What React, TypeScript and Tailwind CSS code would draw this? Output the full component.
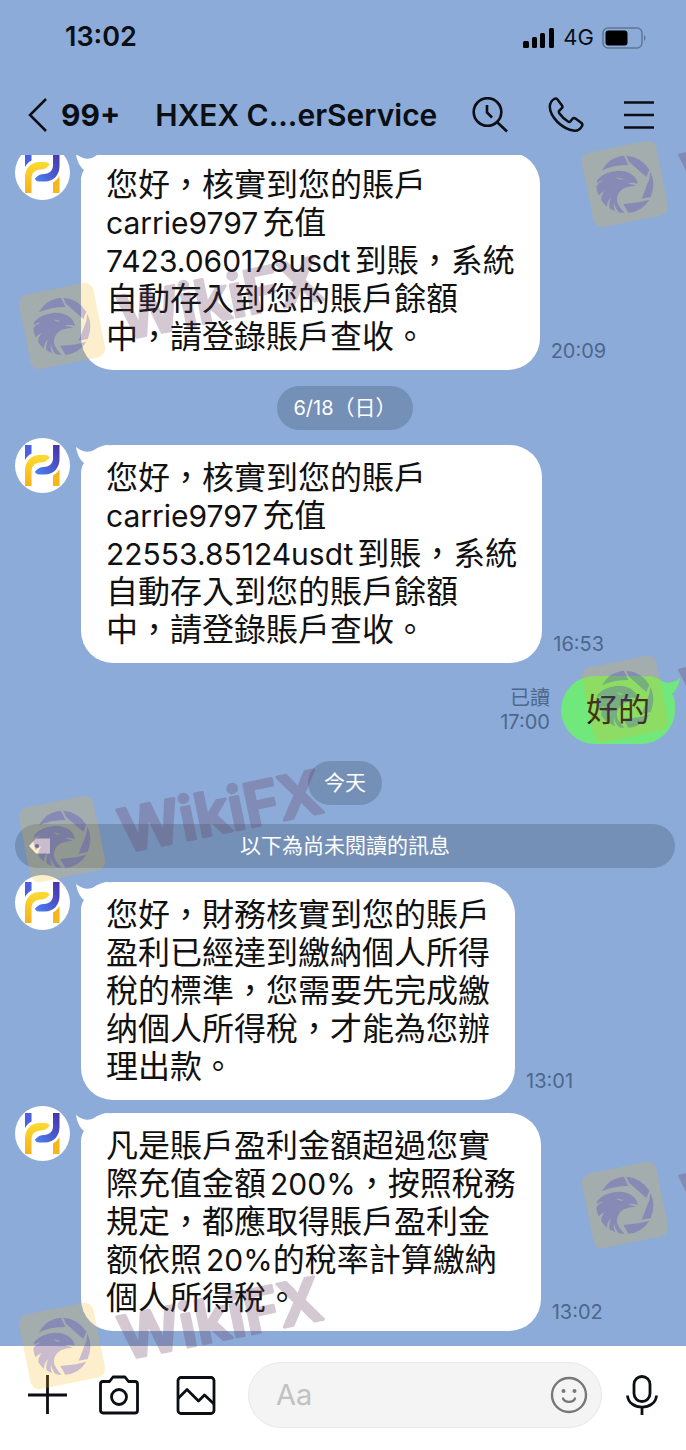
import type { ReactNode } from "react";

interface IMessage {
    id: string;
    time: string;
    lines: string[];
}

const june: IMessage[] = [
    {
        id: '1',
        time: '20:09',
        lines: ['您好，核實到您的賬戶', 'carrie9797充值', '7423.060178usdt到賬，系統', '自動存入到您的賬戶餘額', '中，請登錄賬戶查收。'],
    },
    {
        id: '2',
        time: '16:53',
        lines: ['您好，核實到您的賬戶', 'carrie9797充值', '22553.85124usdt到賬，系統', '自動存入到您的賬戶餘額', '中，請登錄賬戶查收。'],
    },
]

const today: IMessage[] = [
    {
        id: '3',
        time: '13:01',
        lines: ['您好，財務核實到您的賬戶', '盈利已經達到繳納個人所得', '稅的標準，您需要先完成繳', '纳個人所得稅，才能為您辦', '理出款。'],
    },
    {
        id: '4',
        time: '13:02',
        lines: ['凡是賬戶盈利金額超過您實', '際充值金額200%，按照稅務', '規定，都應取得賬戶盈利金', '额依照20%的稅率計算繳納', '個人所得稅。'],
    },
]

// latin runs are set a bit smaller than the chinese text around them
function Line({ text }: { text: string }) {
    const parts = text.split(/([A-Za-z0-9.%]+)/).filter(Boolean)
    return (
        <span className="block whitespace-nowrap">
            {parts.map((p, i) =>
                /^[A-Za-z0-9.%]/.test(p)
                    ? <span key={i} className={i === 0 ? "mr-1 text-[30px] leading-none" : "ml-1 text-[30px] leading-none"}>{p}</span>
                    : p
            )}
        </span>
    )
}

function Avatar() {
    return (
        <svg viewBox="0 0 55 55" className="size-[55px] shrink-0" aria-hidden="true">
            <defs>
                <linearGradient id="hBlue" x1="1" y1="0" x2="0" y2="1">
                    <stop offset="0" stopColor="#4a2fa5" />
                    <stop offset="1" stopColor="#4b83f5" />
                </linearGradient>
                <linearGradient id="hYellow" x1="0" y1="0" x2="0" y2="1">
                    <stop offset="0" stopColor="#fbdc30" />
                    <stop offset="1" stopColor="#f5b01c" />
                </linearGradient>
            </defs>
            <circle cx="27.5" cy="27.5" r="27.5" fill="#fff" />
            <path d="M10 7h6.500v8.500c-3 1.500-5 3.500-6.500 6.500z" fill="#4b5fe0" />
            <path d="M44.500 7v14c0 9-6 15.500-14.500 15.500h-5.500c-3 0-4.500-1.500-4.500-3 3-3.300 5.500-4.500 9-4.500 5.500 0 9-3.500 9-9V7z" fill="url(#hBlue)" />
            <path d="M10 48V32.500c0-9 6-15.500 14.500-15.500H30c3 0 4.500 1.500 4.500 3-3 3.300-5.500 4.500-9 4.500-5.500 0-9 3.500-9 9V48z" fill="url(#hYellow)" />
            <path d="M44.500 31v17H38V37.500c2.500-1.500 5-3.500 6.500-6.500z" fill="#f7b71c" />
        </svg>
    )
}

function Tail({ className }: { className: string }) {
    return (
        <svg viewBox="-5 0 33 30" className={`absolute top-0 h-[30px] w-[33px] ${className}`} aria-hidden="true">
            <path fill="currentColor" d="M-5 2C1 7 8 8 13 5 17 2 22 0 28 0V30H0C0 24 1 21 3 18-1 15-4 9-5 2Z" />
        </svg>
    )
}

function Bubble({ m }: { m: IMessage }) {
    return (
        <li className="flex items-start">
            <Avatar />
            <div className="relative mt-[7px] ml-[11px] rounded-[32px] bg-white px-[25px] py-[14px]">
                <Tail className="-left-[5px] text-white" />
                <p className="relative text-[32px] leading-[38px] text-[#111]">
                    {m.lines.map((l) => <Line key={l} text={l} />)}
                </p>
            </div>
            <time className="mb-[7px] ml-[11px] self-end text-[20px] leading-6 text-[#4d678c]">{m.time}</time>
        </li>
    )
}

function Pill({ children }: { children: ReactNode }) {
    return (
        <span className="flex h-11 items-center rounded-full bg-[#7590b6] px-4 text-[21px] text-white">{children}</span>
    )
}

function Watermark({ className }: { className: string }) {
    return (
        <svg viewBox="-50 -90 330 140" className={`pointer-events-none absolute h-[140px] w-[330px] ${className}`} aria-hidden="true">
            <rect x="-38" y="-38" width="76" height="76" rx="9" fill="#f5b414" opacity=".22" transform="rotate(-11.500)" />
            <g opacity=".25" fill="#3527cf" fillRule="evenodd" transform="scale(.3333) translate(-163 -133)">
                {/* shutter ring */}
                <path d="M94 92Q115 52 160 48L173 76Q128 76 94 92Z" />
                <path d="M167 48Q212 52 236 90L227 112L175 66Z" />
                <path d="M239 96Q257 132 240 172L213 177L236 118Z" />
                <path d="M236 180Q214 216 173 219L158 193L205 188Z" />
                {/* eagle */}
                <path d="M80 120Q98 98 140 93Q170 92 188 108Q200 118 201 133Q186 126 172 132Q188 133 196 139Q170 138 153 150Q136 165 139 185Q145 205 162 219Q151 220 144 217Q132 204 130 188Q127 204 134 215Q124 211 117 206Q113 190 122 172Q108 185 109 201Q98 192 92 182Q91 167 102 154Q89 160 84 167Q77 152 77 140Q86 127 101 122Q89 123 78 130ZM137 113Q146 124 159 118Q150 116 137 113Z" />
            </g>
            <text x="58" y="26" fontSize="60" fontWeight="600" fill="#643a5c" stroke="#643a5c" strokeWidth="3" strokeLinejoin="round" opacity=".27" transform="rotate(-11.500)">WikiFX</text>
        </svg>
    )
}

export default function App() {
    return (
        <main className="relative overflow-hidden bg-[#8cabd9] font-['Inter','Noto_Sans_CJK_TC',sans-serif] text-[#0b0f14]">
            {/* Status bar */}
            <div className="flex h-[75px] items-center pr-10 pl-[65px]">
                <span className="text-[27px] font-semibold">13:02</span>
                <svg viewBox="0 0 32 20" className="ml-auto h-5 w-8" aria-hidden="true">
                    <rect x="0" y="13" width="6" height="7" rx="1.500" />
                    <rect x="9" y="9" width="5" height="11" rx="1.500" />
                    <rect x="17" y="5" width="5" height="15" rx="1.500" />
                    <rect x="26" y="0" width="5" height="20" rx="1.500" />
                </svg>
                <span className="ml-2 text-[22px]">4G</span>
                <svg viewBox="0 0 44 22" className="ml-2 h-[22px] w-11" aria-hidden="true">
                    <rect x="1" y="1" width="39" height="20" rx="5" fill="none" stroke="#5f7794" strokeWidth="1.500" />
                    <rect x="3.500" y="3.500" width="22" height="15" rx="3" />
                    <path d="M42 8c2 1 2 5 0 6z" fill="#5f7794" />
                </svg>
            </div>

            {/* Chat header */}
            <header className="flex h-20 items-center pr-8 pl-7">
                <button aria-label="Back" className="flex items-center gap-[14px] text-[30px] font-bold">
                    <svg viewBox="0 0 19 34" className="h-[34px] w-[19px]" fill="none" stroke="currentColor" strokeWidth="2.500">
                        <path d="M18 1L2 17l16 16" />
                    </svg>
                    99+
                </button>
                <h1 className="ml-[35px] text-[30px] font-semibold whitespace-nowrap">HXEX C...erService</h1>
                <div className="ml-auto flex items-center gap-10">
                    <button aria-label="Search">
                        <svg viewBox="0 0 36 36" className="size-9" fill="none" stroke="currentColor" strokeWidth="2.600">
                            <circle cx="15.500" cy="15" r="13.800" />
                            <path d="M25 25l10 9.500M15 8v7.500l5 5" />
                        </svg>
                    </button>
                    <button aria-label="Call">
                        <svg viewBox="0 0 36 36" className="size-9" fill="none" stroke="currentColor" strokeWidth="2.500" strokeLinejoin="round">
                            <path d="M6.500 1.800Q8.200 1 9.500 2.500L14 8.500Q15 10 13.800 11.200L11 14Q10.500 15 11.500 16.500Q15 21.500 20 24.500Q21.300 25.300 22.300 24.500L24.800 21.500Q26 20.500 27.400 21.500L33.500 26Q35 27.300 34 29Q31.500 34 26.500 33.800Q17 32.500 9.500 25Q1.800 17 1.800 9.500Q2 4.500 6.500 1.800Z" />
                        </svg>
                    </button>
                    <button aria-label="Menu">
                        <svg viewBox="0 0 30 30" className="size-[30px]" stroke="currentColor" strokeWidth="2.600">
                            <path d="M0 2.500h30M0 15h30M0 27.500h30" />
                        </svg>
                    </button>
                </div>
            </header>

            {/* Messages */}
            <section className="overflow-hidden pr-[11px] pb-[15px] pl-[15px]">
                <ul className="-mt-[10px]">
                    <Bubble m={june[0]} />
                    <li className="mt-4 flex justify-center"><Pill><span className="text-[20px]">6/18</span>（日）</Pill></li>
                </ul>
                <ul className="mt-2">
                    <Bubble m={june[1]} />
                    <li className="mt-[13px] flex items-center justify-end">
                        <div className="mr-[11px] text-right text-[20px] leading-6 text-[#4d678c]">
                            <p>已讀</p>
                            <time>17:00</time>
                        </div>
                        <div className="relative rounded-[34px] bg-[#70e87c] px-[25px] py-[15px]">
                            <Tail className="-right-[5px] -scale-x-100 text-[#70e87c]" />
                            <p className="relative text-[32px] leading-[38px] text-[#111]">好的</p>
                        </div>
                    </li>
                    <li className="mt-[17px] flex justify-center"><Pill>今天</Pill></li>
                </ul>
                <div className="relative mt-[19px] flex h-11 items-center justify-center rounded-full bg-[#7590b6] text-[21px] text-white">
                    <svg viewBox="0 0 21 16" className="absolute left-[14px] h-4 w-[21px]" aria-hidden="true">
                        <path d="M0 8l7-7.500h14v15H7z" fill="#fff" />
                        <circle cx="8" cy="8" r="2" fill="#66799c" />
                    </svg>
                    以下為尚未閱讀的訊息
                </div>
                <ul className="mt-[7px] space-y-[6px]">
                    {today.map((m) => <Bubble key={m.id} m={m} />)}
                </ul>
            </section>

            {/* Composer */}
            <footer className="flex items-center bg-white px-7 pt-4 pb-[22px]">
                <button aria-label="More">
                    <svg viewBox="0 0 40 40" className="size-10" stroke="currentColor" strokeWidth="2.800">
                        <path d="M0 20h39M19.500 0v39" />
                    </svg>
                </button>
                <button aria-label="Camera" className="ml-[31px]">
                    <svg viewBox="0 0 40 40" className="size-10" fill="none" stroke="currentColor" strokeWidth="2.800" strokeLinejoin="round">
                        <path d="M4 6.500h6.500l3.500-4.500h12l3.500 4.500H36c1.500 0 2.500 1 2.500 2.500v26.500c0 1.500-1 2.500-2.500 2.500H4c-1.500 0-2.500-1-2.500-2.500V9c0-1.500 1-2.500 2.500-2.500z" />
                        <circle cx="20" cy="22" r="7.500" />
                    </svg>
                </button>
                <button aria-label="Photo" className="ml-[37px]">
                    <svg viewBox="0 0 40 40" className="size-10" fill="none" stroke="currentColor" strokeWidth="2.800" strokeLinejoin="round">
                        <rect x="2" y="2.500" width="36" height="36" rx="3" />
                        <path d="M2 23.500l9-9L22.500 26l6-6L38 29" />
                    </svg>
                </button>
                <label className="ml-8 flex h-[66px] min-w-0 flex-1 items-center rounded-full border border-[#e8e8e8] bg-[#f4f4f4] pr-[13px] pl-[27px]">
                    <input aria-label="Message" placeholder="Aa" className="w-full min-w-0 text-[29px] outline-none placeholder:text-[#c2c2c2]" />
                    <button aria-label="Stickers">
                        <svg viewBox="0 0 38 38" className="size-[38px]" fill="none" stroke="#777" strokeWidth="2.400" strokeLinecap="round">
                            <circle cx="19" cy="19" r="17" />
                            <path d="M13 22.500c2 4.500 10 4.500 12 0" />
                            <circle cx="13.500" cy="15" r="2" fill="#777" stroke="none" />
                            <circle cx="24.500" cy="15" r="2" fill="#777" stroke="none" />
                        </svg>
                    </button>
                </label>
                <button aria-label="Record" className="ml-6">
                    <svg viewBox="0 0 32 40" className="h-10 w-8" fill="none" stroke="currentColor" strokeWidth="2.800">
                        <rect x="8" y="1.500" width="16" height="25" rx="8" />
                        <path d="M1.500 20.500c1 15.500 28 15.500 29 0M16 32v8" />
                    </svg>
                </button>
            </footer>

            {/* Watermarks */}
            <Watermark className="top-[236px] left-3" />
            <Watermark className="top-[749px] left-3" />
            <Watermark className="top-[1256px] left-3" />
            <Watermark className="top-[94px] left-[575px]" />
            <Watermark className="top-[609px] left-[575px]" />
            <Watermark className="top-[1115px] left-[575px]" />
        </main>
    )
}
